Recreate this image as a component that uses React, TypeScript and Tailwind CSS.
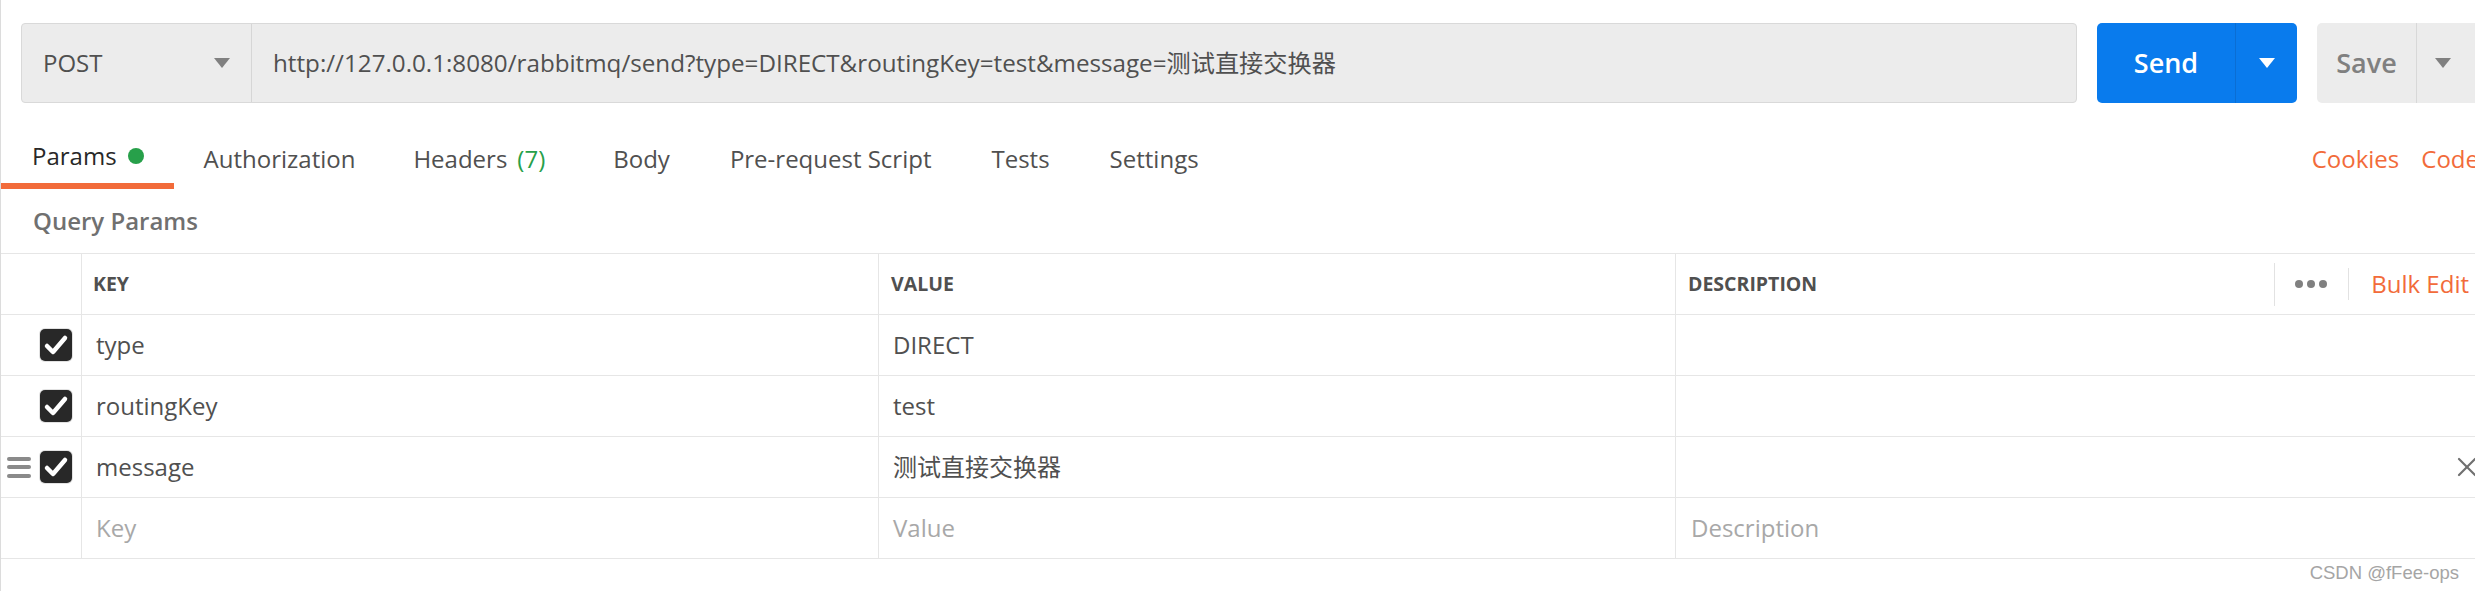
import { X } from 'lucide-react'

const font = { fontFamily: '"Open Sans", "Noto Sans CJK SC", sans-serif' }

function Caret({ color }: { color: string }) {
  return (
    <svg width="16" height="10" viewBox="0 0 16 10" className="shrink-0">
      <path d="M0 0 H16 L8 10 Z" fill={color} />
    </svg>
  )
}

function Checkbox() {
  return (
    <div className="w-[32px] h-[32px] rounded-[5px] bg-[#282828] ring-1 ring-[#e2e2e2] flex items-center justify-center shrink-0">
      <svg width="32" height="32" viewBox="0 0 32 32">
        <path d="M7 17 L13 23 L25 9" fill="none" stroke="#fff" strokeWidth="4.5" strokeLinecap="round" strokeLinejoin="round" />
      </svg>
    </div>
  )
}

function DragHandle() {
  return (
    <div className="flex flex-col gap-[4.5px] w-[24px]">
      <span className="h-[4px] rounded-full bg-[#8a8a8a]" />
      <span className="h-[4px] rounded-full bg-[#8a8a8a]" />
      <span className="h-[4px] rounded-full bg-[#8a8a8a]" />
    </div>
  )
}

const rows = [
  { key: 'type', value: 'DIRECT' },
  { key: 'routingKey', value: 'test' },
  { key: 'message', value: '测试直接交换器', active: true },
]

export default function App() {
  return (
    <div style={font} className="relative w-[2475px] h-[591px] overflow-hidden bg-white border-l border-[#dcdcdc]">
      {/* URL bar */}
      <div className="flex items-start pt-[23px] pl-[20px]">
        <div className="w-[2056px] h-[80px] shrink-0 flex rounded-[4px] border border-[#d9d9d9] bg-[#ececec]">
          <div className="w-[230px] flex items-center justify-between pl-[21px] pr-[21px] border-r border-[#d6d6d6]">
            <span className="text-[24px] text-[#505050] font-medium">POST</span>
            <Caret color="#808080" />
          </div>
          <div className="flex-1 flex items-center pl-[21px] text-[24.2px] text-[#505050]">
            http://127.0.0.1:8080/rabbitmq/send?type=DIRECT&amp;routingKey=test&amp;message=测试直接交换器
          </div>
        </div>
        <div className="ml-[20px] w-[200px] h-[80px] shrink-0 flex rounded-[5px] bg-[#097bed]">
          <div className="w-[139px] flex items-center justify-center border-r border-[#0a6ed4] text-[27px] font-semibold text-white">
            Send
          </div>
          <div className="flex-1 flex items-center justify-center">
            <Caret color="#ffffff" />
          </div>
        </div>
        <div className="ml-[20px] w-[200px] h-[80px] shrink-0 flex rounded-[5px] bg-[#ececec]">
          <div className="w-[100px] flex items-center justify-center border-r border-[#d8d8d8] text-[27px] font-semibold text-[#808080]">
            Save
          </div>
          <div className="flex items-center pl-[18px]">
            <Caret color="#808080" />
          </div>
        </div>
      </div>

      {/* Tabs */}
      <div className="flex items-start mt-[30px] text-[24px] text-[#505050]">
        <div className="h-[56px] flex items-center pb-[5px] pl-[31px] pr-[30px] border-b-[6px] border-[#f26b3a] text-[#282828]">
          Params
          <span className="ml-[11px] w-[16px] h-[16px] rounded-full bg-[#27a04a]" />
        </div>
        <div className="h-[56px] flex items-center pb-[5px] pl-[30px] pr-[29px]">Authorization</div>
        <div className="h-[56px] flex items-center pb-[5px] pl-[29px] pr-[38px]">
          Headers<span className="ml-[10px] text-[#27a04a]">(7)</span>
        </div>
        <div className="h-[56px] flex items-center pb-[5px] px-[30px]">Body</div>
        <div className="h-[56px] flex items-center pb-[5px] px-[30px]">Pre-request Script</div>
        <div className="h-[56px] flex items-center pb-[5px] px-[30px]">Tests</div>
        <div className="h-[56px] flex items-center pb-[5px] px-[30px]">Settings</div>
        <div className="flex-1" />
        <div className="h-[56px] flex items-center pb-[5px] text-[#f26b3a] whitespace-nowrap -mr-[4px]">
          <span>Cookies</span>
          <span className="ml-[22px]">Code</span>
        </div>
      </div>

      {/* Query Params label */}
      <div className="h-[64px] flex items-center pl-[32px] text-[24px] font-semibold text-[#707070]">
        Query Params
      </div>

      {/* Table */}
      <div className="border-t border-[#e6e6e6]">
        <div className="flex h-[61px] border-b border-[#e6e6e6] text-[19.5px] font-bold text-[#505050]">
          <div className="w-[81px] shrink-0 border-r border-[#e6e6e6]" />
          <div className="w-[797px] shrink-0 border-r border-[#e6e6e6] flex items-center pl-[11px]">KEY</div>
          <div className="w-[797px] shrink-0 border-r border-[#e6e6e6] flex items-center pl-[12px]">VALUE</div>
          <div className="flex-1 flex items-center pl-[12px]">
            <span>DESCRIPTION</span>
            <div className="flex-1" />
            <span className="w-px h-[43px] bg-[#e2e2e2]" />
            <span className="ml-[20px] flex gap-[4px]">
              <span className="w-[8px] h-[8px] rounded-full bg-[#808080]" />
              <span className="w-[8px] h-[8px] rounded-full bg-[#808080]" />
              <span className="w-[8px] h-[8px] rounded-full bg-[#808080]" />
            </span>
            <span className="ml-[21px] w-px h-[32px] bg-[#e2e2e2]" />
            <span className="ml-[22px] mr-[6px] text-[24px] font-normal text-[#f26b3a]">Bulk Edit</span>
          </div>
        </div>

        {rows.map(r => (
          <div key={r.key} className="flex h-[61px] border-b border-[#e6e6e6] text-[24px] text-[#505050]">
            <div className="w-[81px] shrink-0 border-r border-[#e6e6e6] flex items-center justify-end gap-[9px] pr-[9px]">
              {r.active && <DragHandle />}
              <Checkbox />
            </div>
            <div className="w-[797px] shrink-0 border-r border-[#e6e6e6] flex items-center pl-[14px]">{r.key}</div>
            <div className="w-[797px] shrink-0 border-r border-[#e6e6e6] flex items-center pl-[14px]">{r.value}</div>
            <div className="flex-1 flex items-center justify-end">
              {r.active && <X className="w-[32px] h-[32px] text-[#707070] -mr-[8px] shrink-0" strokeWidth={1.6} />}
            </div>
          </div>
        ))}

        <div className="flex h-[61px] border-b border-[#e6e6e6] text-[24px] text-[#a8a8a8]">
          <div className="w-[81px] shrink-0 border-r border-[#e6e6e6]" />
          <div className="w-[797px] shrink-0 border-r border-[#e6e6e6] flex items-center pl-[14px]">Key</div>
          <div className="w-[797px] shrink-0 border-r border-[#e6e6e6] flex items-center pl-[14px]">Value</div>
          <div className="flex-1 flex items-center pl-[15px]">Description</div>
        </div>
      </div>

      {/* watermark */}
      <div
        style={{ fontFamily: '"Liberation Sans", Arial, sans-serif' }}
        className="absolute right-[16px] bottom-[9px] text-[18.5px] text-[#a5a5a5] leading-none"
      >
        CSDN @fFee-ops
      </div>
    </div>
  )
}
